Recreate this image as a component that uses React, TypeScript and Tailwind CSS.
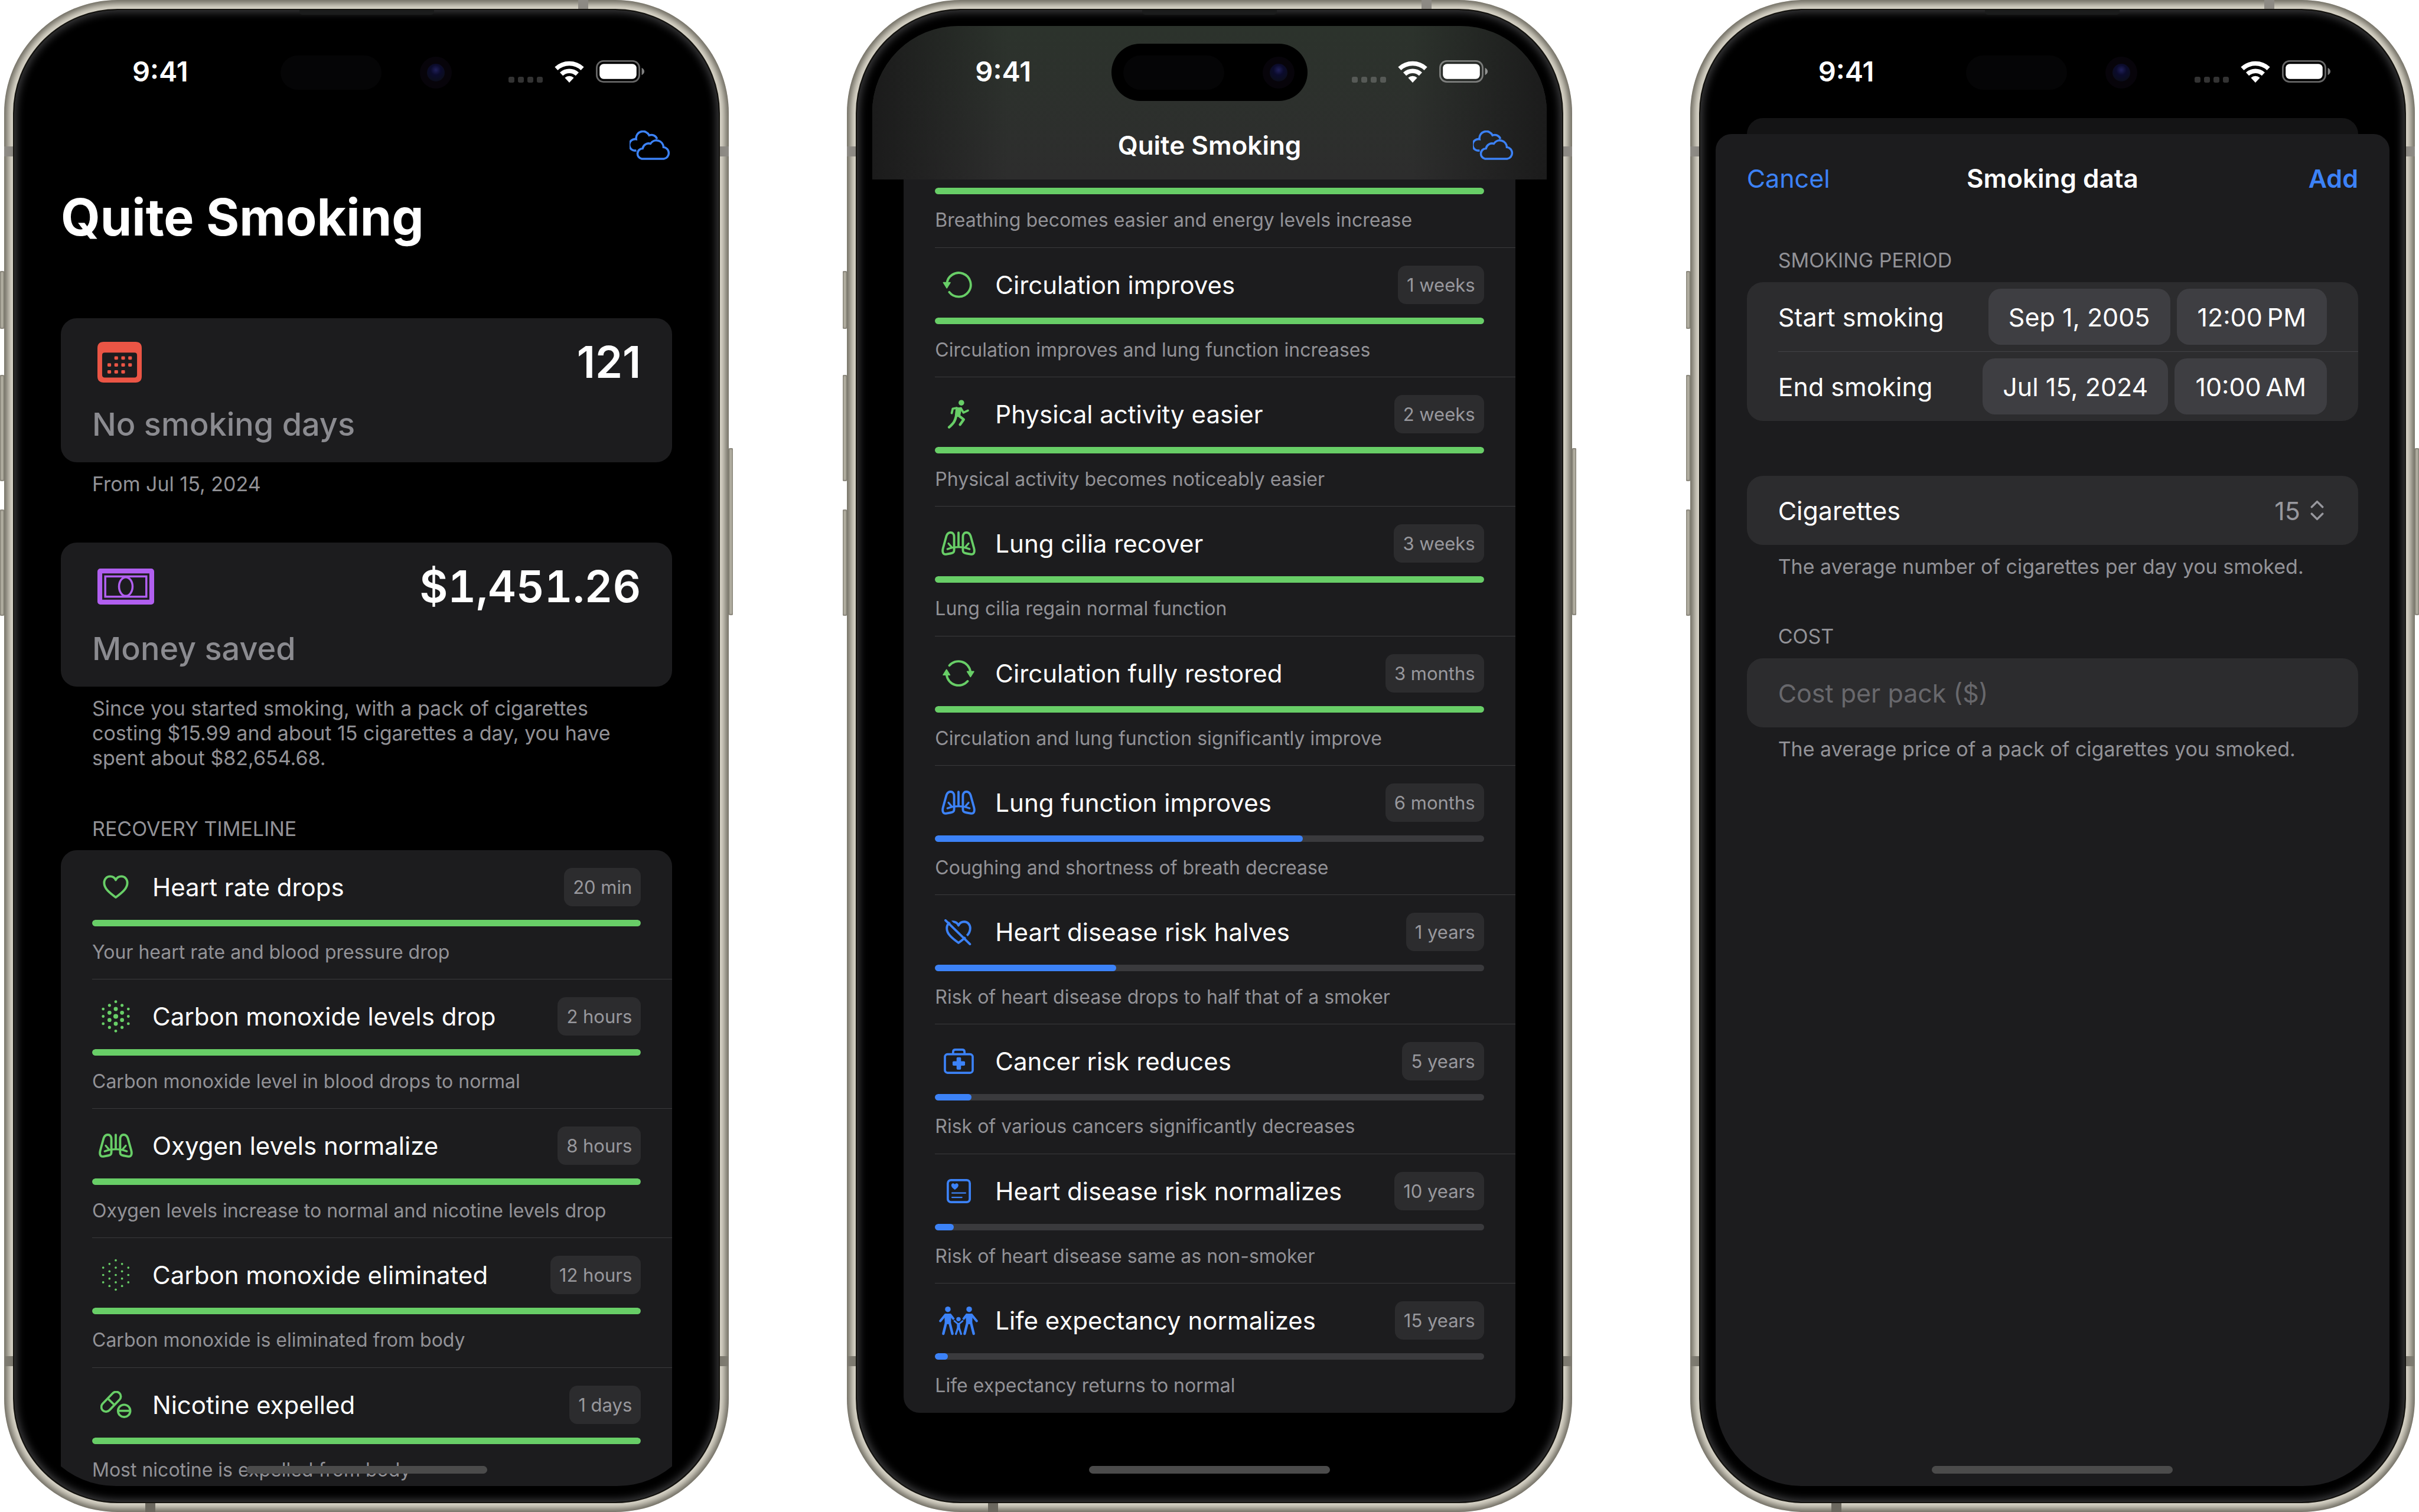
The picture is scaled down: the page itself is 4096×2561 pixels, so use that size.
import type { ReactNode } from "react";

/* ---------- icons ---------- */

function CloudIcon() {
  return (
    <svg viewBox="0 0 78 56" className="h-[50px] w-[69px]" fill="none" stroke="#3c82f7" strokeWidth="4" strokeLinejoin="miter" aria-hidden="true">
      <path d="M13 38A11 11 0 1 1 12.6 16.5A13.2 13.2 0 0 1 37.6 9A11.4 11.4 0 0 1 52.6 16" />
      <path d="M23.3 54A10 10 0 0 1 25 34.2A11.8 11.8 0 0 1 40 25A13.6 13.6 0 0 1 65 31.8A11.2 11.2 0 0 1 65.6 54Z" />
    </svg>
  );
}

function WifiIcon() {
  return (
    <svg viewBox="0 0 57 42" className="h-[37px] w-[50px]" aria-hidden="true">
      <g fill="none" stroke="#fff">
        <path d="M3.3 15A37 37 0 0 1 53.7 15" strokeWidth="8.6" />
        <path d="M13.2 25.5A22.5 22.5 0 0 1 43.8 25.5" strokeWidth="8.6" />
      </g>
      <path d="M28.5 42L19.8 32.8A12.8 12.8 0 0 1 37.2 32.8Z" fill="#fff" />
    </svg>
  );
}

function BatteryIcon() {
  return (
    <svg viewBox="0 0 93 43" className="h-[38px] w-[82px]" aria-hidden="true">
      <rect x="1.6" y="1.6" width="81.8" height="39.8" rx="13" fill="none" stroke="#fff" strokeOpacity=".4" strokeWidth="3.2" />
      <rect x="7" y="7" width="71" height="29" rx="8" fill="#fff" />
      <path d="M88 14.5C91.6 16.6 93 19 93 21.5C93 24 91.6 26.4 88 28.5Z" fill="#fff" fillOpacity=".5" />
    </svg>
  );
}

function CalendarIcon() {
  const cells: [number, number][] = [
    [36, 31], [49.3, 31], [62.6, 31],
    [22.7, 44.3], [36, 44.3], [49.3, 44.3], [62.6, 44.3],
    [22.7, 57.6], [36, 57.6], [49.3, 57.6],
  ];
  return (
    <svg viewBox="0 0 85 78" className="h-[69px] w-[75px]" aria-hidden="true">
      <path
        fill="#eb5545"
        fillRule="evenodd"
        d="M12 0H73Q85 0 85 12V66Q85 78 73 78H12Q0 78 0 66V12Q0 0 12 0ZM14 20.5Q9 20.5 9 25.5V63.5Q9 68.5 14 68.5H71Q76 68.5 76 63.5V25.5Q76 20.5 71 20.5Z"
      />
      {cells.map(([x, y]) => (
        <rect key={`${x}-${y}`} x={x - 3.5} y={y - 3.2} width="7" height="6.4" rx="1.6" fill="#eb5545" />
      ))}
    </svg>
  );
}

function BanknoteIcon() {
  return (
    <svg viewBox="0 0 109 69" className="h-[61px] w-[96px]" fill="none" stroke="#b15ff0" aria-hidden="true">
      <rect x="4.6" y="4.6" width="99.8" height="59.8" rx="1" strokeWidth="9.2" />
      <rect x="15" y="15" width="79" height="39" strokeWidth="4" />
      <ellipse cx="54.5" cy="34.5" rx="13" ry="18" strokeWidth="4" />
    </svg>
  );
}

const HEART = "M25 43.5C12 34 2.5 26 2.5 15.5C2.5 8 7.5 2.8 14 2.8C19 2.8 23 5.5 25 9.8C27 5.5 31 2.8 36 2.8C42.5 2.8 47.5 8 47.5 15.5C47.5 26 38 34 25 43.5Z";

function HeartIcon() {
  return (
    <svg viewBox="0 0 50 47" className="h-[41px] w-[44px]" fill="none" stroke="currentColor" strokeWidth="4.4" strokeLinejoin="round" aria-hidden="true">
      <path d={HEART} />
    </svg>
  );
}

function HeartSlashIcon() {
  return (
    <svg viewBox="-2 -2 54 50" className="h-[44px] w-[48px]" fill="none" strokeLinecap="round" aria-hidden="true">
      <path d={HEART} stroke="currentColor" strokeWidth="4.4" strokeLinejoin="round" />
      <path d="M4 -3L51 42" stroke="#1c1c1e" strokeWidth="4.4" />
      <path d="M0 0L47 46" stroke="currentColor" strokeWidth="4.4" />
    </svg>
  );
}

/* Hexagonal dot cloud: [column, row offset, radius when dense] */
const DOTS: [number, number, number][] = [
  [-2, -1, 2.7], [-2, 0, 2.7], [-2, 1, 2.7],
  [-1, -1.5, 2.9], [-1, -0.5, 3.8], [-1, 0.5, 3.8], [-1, 1.5, 2.9],
  [0, -2, 2.7], [0, -1, 3.9], [0, 0, 4.6], [0, 1, 3.9], [0, 2, 2.7],
  [1, -1.5, 2.9], [1, -0.5, 3.8], [1, 0.5, 3.8], [1, 1.5, 2.9],
  [2, -1, 2.7], [2, 0, 2.7], [2, 1, 2.7],
];

function DotsIcon({ sparse = false }: { sparse?: boolean }) {
  return (
    <svg viewBox="0 0 54 62" className="h-[55px] w-[48px]" fill="currentColor" aria-hidden="true">
      {DOTS.map(([cx, cy, r]) => (
        <circle key={`${cx}:${cy}`} cx={27 + cx * 12} cy={31 + cy * 14} r={sparse ? 2.1 : r} />
      ))}
    </svg>
  );
}

function LungsIcon() {
  const lobe = "M24.5 11C24.5 5 21.5 2.3 17.5 2.3C13 2.3 10.8 5 9.4 9.4L2.9 33C1.3 39.5 2.5 45 8.5 44.5L18.5 42.7C23 42 24.5 40.5 24.5 36.5Z";
  const bronchi = "M33 30.5C28 30.5 20 31 11.5 34.5M13.5 23.5L19.5 30.5";
  return (
    <svg viewBox="0 0 66 47" className="h-[41px] w-[58px]" fill="none" stroke="currentColor" strokeWidth="4.4" strokeLinecap="round" strokeLinejoin="round" aria-hidden="true">
      <path d="M33 2.5V30" />
      <path d={lobe} />
      <path d={bronchi} strokeWidth="3.8" />
      <g transform="matrix(-1 0 0 1 66 0)">
        <path d={lobe} />
        <path d={bronchi} strokeWidth="3.8" />
      </g>
    </svg>
  );
}

function PillsIcon() {
  return (
    <svg viewBox="0 0 60 53" className="h-[47px] w-[53px]" fill="none" stroke="currentColor" strokeWidth="4.2" aria-hidden="true">
      <g transform="rotate(-46 20.5 20.5)">
        <rect x="-2.5" y="11.5" width="46" height="18" rx="9" />
        <path d="M20.5 11.5V29.5" />
      </g>
      <circle cx="45.5" cy="38" r="16.5" fill="#1c1c1e" stroke="none" />
      <circle cx="45.5" cy="38" r="11.8" />
      <path d="M34 38H57" />
    </svg>
  );
}

function LoopIcon() {
  return (
    <svg viewBox="0 0 62 51" className="h-[45px] w-[55px]" aria-hidden="true">
      <path d="M8 23.5A23 23 0 1 1 12.8 39.5" fill="none" stroke="currentColor" strokeWidth="4.4" strokeLinecap="round" />
      <path d="M1.5 21H14.5L8 31.5Z" fill="currentColor" stroke="currentColor" strokeWidth="2" strokeLinejoin="round" />
    </svg>
  );
}

function CycleIcon() {
  return (
    <svg viewBox="0 0 61 51" className="h-[45px] w-[54px]" aria-hidden="true">
      <g fill="none" stroke="currentColor" strokeWidth="4.4" strokeLinecap="round">
        <path d="M13 10.5A23 23 0 0 1 53.3 22" />
        <path d="M48 40.5A23 23 0 0 1 7.7 29" />
      </g>
      <g fill="currentColor" stroke="currentColor" strokeWidth="2" strokeLinejoin="round">
        <path d="M1.2 28.5H13.8L7.5 18.5Z" />
        <path d="M47.2 22H59.8L53.5 32Z" />
      </g>
    </svg>
  );
}

function RunnerIcon() {
  return (
    <svg viewBox="0 0 43 56" className="h-[50px] w-[38px]" fill="none" stroke="currentColor" strokeLinecap="round" strokeLinejoin="round" aria-hidden="true">
      <circle cx="27" cy="5.6" r="5.4" fill="currentColor" stroke="none" />
      <path d="M18.5 17L25 17L22.5 30L17 30Z" fill="currentColor" strokeWidth="5" />
      <path d="M18 15.5L10.5 17L8.5 25.5" strokeWidth="4.2" />
      <path d="M26 16L31 24.5L39.5 20.5" strokeWidth="4.2" />
      <path d="M21.5 30L31.5 37.5L24.5 47.5" strokeWidth="5" />
      <path d="M17 31C15 40 13 44 3.5 52.5" strokeWidth="5" />
    </svg>
  );
}

function MedicalBagIcon() {
  return (
    <svg viewBox="0 0 58 49" className="h-[43px] w-[51px]" fill="none" stroke="currentColor" strokeWidth="4.2" aria-hidden="true">
      <rect x="2.2" y="11" width="53.6" height="35.8" rx="5" />
      <path d="M18 10V6.5Q18 2.2 22.3 2.2H35.7Q40 2.2 40 6.5V10" />
      <g fill="currentColor" stroke="none">
        <rect x="24.7" y="16.8" width="8.6" height="24" rx="2" />
        <rect x="17" y="24.5" width="24" height="8.6" rx="2" />
      </g>
    </svg>
  );
}

function RecordIcon() {
  return (
    <svg viewBox="0 0 46 46" className="h-[41px] w-[41px]" fill="none" stroke="currentColor" strokeLinecap="round" aria-hidden="true">
      <rect x="2.1" y="2.1" width="41.8" height="41.8" rx="6" strokeWidth="4.2" />
      <path d="M15.5 20.5C11.5 17.5 8.7 15 8.7 11.8C8.7 9.5 10.3 8 12.2 8C13.7 8 14.9 8.8 15.5 10.2C16.1 8.8 17.3 8 18.8 8C20.7 8 22.3 9.5 22.3 11.8C22.3 15 19.5 17.5 15.5 20.5Z" fill="currentColor" stroke="none" />
      <path d="M10.3 26.5H35.7M10.3 34.9H28.7" strokeWidth="2.7" />
    </svg>
  );
}

function FamilyIcon() {
  const adult = (
    <>
      <circle cx="17" cy="6" r="5.4" fill="currentColor" stroke="none" />
      <path d="M13 17H21L20.5 32H13.5Z" fill="currentColor" strokeWidth="5" />
      <path d="M12.5 16.5L2.5 28.5M21.5 16.5L27.5 24" strokeWidth="4.6" />
      <path d="M13.5 32L8.3 53M20.5 32L25.7 53" strokeWidth="5" />
    </>
  );
  return (
    <svg viewBox="0 0 75 56" className="h-[50px] w-[66px]" fill="none" stroke="currentColor" strokeLinecap="round" strokeLinejoin="round" aria-hidden="true">
      {adult}
      <g transform="matrix(-1 0 0 1 75 0)">{adult}</g>
      <circle cx="37.5" cy="25" r="4.2" fill="currentColor" stroke="none" />
      <path d="M29.5 28.5L36 34H39L45.5 28.5" strokeWidth="3.2" />
      <path d="M36 34H39V43H36Z" fill="currentColor" strokeWidth="3" />
      <path d="M36 43L32.5 53.5M39 43L42.5 53.5" strokeWidth="3.8" />
    </svg>
  );
}

function UpDownIcon() {
  return (
    <svg viewBox="0 0 26 40" className="h-[35px] w-[23px]" fill="none" stroke="#98989e" strokeWidth="4" strokeLinecap="round" strokeLinejoin="round" aria-hidden="true">
      <path d="M2.5 13.5L13 3L23.5 13.5M2.5 26.5L13 37L23.5 26.5" />
    </svg>
  );
}

/* ---------- device ---------- */

function SideButton({ className }: { className: string }) {
  return <div className={`w-full rounded-[2px] bg-[#b9b5a8] shadow-[inset_0_0_3px_1px_#6f6c62] ${className}`} />;
}

function StatusBar() {
  return (
    <div className="relative flex h-[143px] shrink-0 items-center justify-between pt-[11px] pr-[100px] pl-[174px]">
      <time className="text-[47px] leading-[56px] font-semibold">9:41</time>
      <div className="absolute top-[30px] left-1/2 flex h-[97px] w-[332px] -translate-x-1/2 items-center justify-between rounded-full bg-black pr-[22px] pl-[20px]">
        <div className="h-[58px] w-[171px] rounded-full bg-[#050506]" />
        <div className="flex size-[54px] items-center justify-center rounded-full bg-[#07040a]">
          <div className="size-[30px] rounded-full bg-[radial-gradient(circle_at_50%_35%,#20205a_0,#0b0b2c_35%,#0b0d1e_70%,#080812)]" />
        </div>
      </div>
      <div className="flex items-end gap-[20px]">
        <div className="flex gap-[6px]">
          {[0, 1, 2, 3].map((n) => (
            <div key={n} className="size-[10px] rounded-[3px] bg-white/20" />
          ))}
        </div>
        <WifiIcon />
        <BatteryIcon />
      </div>
    </div>
  );
}

function Phone({ header, children }: { header?: ReactNode; children: ReactNode }) {
  return (
    <section className="flex min-h-0 min-w-0">
      <div className="flex w-[7px] shrink-0 flex-col pt-[459px]">
        <SideButton className="h-[98px]" />
        <SideButton className="mt-[78px] h-[180px]" />
        <SideButton className="mt-[48px] h-[180px]" />
      </div>
      <div className="relative min-w-0 flex-1 rounded-[192px] bg-[#dad6c9] p-[15px] shadow-[inset_0_0_11px_6px_#6b685e]">
        <div className="absolute top-[248px] left-0 h-[17px] w-full bg-[#8d8a84]" />
        <div className="absolute bottom-[247px] left-0 h-[17px] w-full bg-[#7d7a70]" />
        <div className="absolute top-0 right-[238px] h-[15px] w-[17px] bg-[#8d8a84]" />
        <div className="absolute bottom-0 left-[239px] h-[15px] w-[17px] bg-[#6b685f]" />
        <div className="relative h-full rounded-[177px] border-2 border-[#14130f] bg-black px-[26px] py-[27px] shadow-[inset_0_0_14px_4px_#3c3c3e]">
          <div className="absolute top-0 left-1/2 h-[8px] w-[228px] -translate-x-1/2 rounded-b-[5px] bg-[#1b1c1c]" />
          <div className="relative flex h-full flex-col overflow-hidden rounded-[146px] bg-black text-white">
            {header ?? <StatusBar />}
            {children}
            <div className="absolute bottom-[21px] left-1/2 h-[13px] w-[408px] -translate-x-1/2 rounded-full bg-[#4b4b4b]" />
          </div>
        </div>
      </div>
      <div className="flex w-[7px] shrink-0 flex-col pt-[759px]">
        <SideButton className="h-[283px]" />
      </div>
    </section>
  );
}

/* ---------- recovery timeline ---------- */

type Milestone = { title: string; badge: string; note: string; icon: ReactNode; progress: number };

function Progress({ value }: { value: number }) {
  return (
    <div role="progressbar" aria-valuenow={value} aria-valuemin={0} aria-valuemax={100} className="h-[11px] overflow-hidden rounded-full bg-[#3a3a3d]">
      <div className={`h-full rounded-full ${value === 100 ? "bg-[#68ce67]" : "bg-[#3c82f7]"}`} style={{ width: `${value}%` }} />
    </div>
  );
}

function MilestoneRow({ item }: { item: Milestone }) {
  return (
    <li className="ml-[53px] border-b border-[#3a3a3c] pt-[30px] pr-[53px] pb-[24px] last:border-b-transparent nth-[4n]:pb-[25px]">
      <div className="flex h-[65px] items-center">
        <div className={`flex w-[80px] shrink-0 justify-center ${item.progress === 100 ? "text-[#68ce67]" : "text-[#3c82f7]"}`}>{item.icon}</div>
        <h3 className="ml-[22px] flex-1 whitespace-nowrap text-[42px] leading-[56px]">{item.title}</h3>
        <span className="rounded-[14px] bg-[#2c2c2e] px-[15px] py-[11px] text-[31px] leading-[43px] whitespace-nowrap text-[#98989d]">{item.badge}</span>
      </div>
      <div className="mt-[23px]">
        <Progress value={item.progress} />
      </div>
      <p className="mt-[23px] text-[32px] leading-[42px] whitespace-nowrap text-[#929297]">{item.note}</p>
    </li>
  );
}

const EARLY: Milestone[] = [
  { title: "Heart rate drops", badge: "20 min", note: "Your heart rate and blood pressure drop", icon: <HeartIcon />, progress: 100 },
  { title: "Carbon monoxide levels drop", badge: "2 hours", note: "Carbon monoxide level in blood drops to normal", icon: <DotsIcon />, progress: 100 },
  { title: "Oxygen levels normalize", badge: "8 hours", note: "Oxygen levels increase to normal and nicotine levels drop", icon: <LungsIcon />, progress: 100 },
  { title: "Carbon monoxide eliminated", badge: "12 hours", note: "Carbon monoxide is eliminated from body", icon: <DotsIcon sparse />, progress: 100 },
  { title: "Nicotine expelled", badge: "1 days", note: "Most nicotine is expelled from body", icon: <PillsIcon />, progress: 100 },
];

const LATE: Milestone[] = [
  { title: "Circulation improves", badge: "1 weeks", note: "Circulation improves and lung function increases", icon: <LoopIcon />, progress: 100 },
  { title: "Physical activity easier", badge: "2 weeks", note: "Physical activity becomes noticeably easier", icon: <RunnerIcon />, progress: 100 },
  { title: "Lung cilia recover", badge: "3 weeks", note: "Lung cilia regain normal function", icon: <LungsIcon />, progress: 100 },
  { title: "Circulation fully restored", badge: "3 months", note: "Circulation and lung function significantly improve", icon: <CycleIcon />, progress: 100 },
  { title: "Lung function improves", badge: "6 months", note: "Coughing and shortness of breath decrease", icon: <LungsIcon />, progress: 67 },
  { title: "Heart disease risk halves", badge: "1 years", note: "Risk of heart disease drops to half that of a smoker", icon: <HeartSlashIcon />, progress: 33 },
  { title: "Cancer risk reduces", badge: "5 years", note: "Risk of various cancers significantly decreases", icon: <MedicalBagIcon />, progress: 6.6 },
  { title: "Heart disease risk normalizes", badge: "10 years", note: "Risk of heart disease same as non-smoker", icon: <RecordIcon />, progress: 3.4 },
  { title: "Life expectancy normalizes", badge: "15 years", note: "Life expectancy returns to normal", icon: <FamilyIcon />, progress: 2.3 },
];

/* ---------- screens ---------- */

function StatCard({ icon, label, children }: { icon: ReactNode; label: string; children: ReactNode }) {
  return (
    <div className="rounded-[27px] bg-[#1c1c1e] px-[53px] pt-[38px] pb-[29px]">
      <div className="flex h-[72px] items-center justify-between pl-[9px] text-[74px] leading-[72px] font-semibold">
        {icon}
        {children}
      </div>
      <p className="mt-[35px] text-[54px] leading-[70px] font-medium text-[#8b8b90]">{label}</p>
    </div>
  );
}

function Footnote({ children }: { children: ReactNode }) {
  return <p className="mt-[16px] px-[53px] text-[34px] leading-[42px] text-[#929297]">{children}</p>;
}

function SectionLabel({ children }: { children: ReactNode }) {
  return <h2 className="px-[53px] text-[34px] leading-[42px] text-[#929297] uppercase">{children}</h2>;
}

function SummaryScreen() {
  return (
    <Phone>
      <div className="flex h-[117px] shrink-0 items-center justify-end pr-[56px]">
        <button type="button" aria-label="Weather">
          <CloudIcon />
        </button>
      </div>
      <main className="px-[53px]">
        <h1 className="mt-[10px] text-[86px] leading-[108px] font-bold whitespace-nowrap">Quite Smoking</h1>
        <div className="mt-[117px]">
          <StatCard icon={<CalendarIcon />} label="No smoking days">
            <span>121</span>
          </StatCard>
          <Footnote>From Jul 15, 2024</Footnote>
        </div>
        <div className="mt-[78px]">
          <StatCard icon={<BanknoteIcon />} label="Money saved">
            <span className="tabular-nums">$1,451.26</span>
          </StatCard>
          <Footnote>Since you started smoking, with a pack of cigarettes costing $15.99 and about 15 cigarettes a day, you have spent about $82,654.68.</Footnote>
        </div>
        <div className="mt-[78px]">
          <SectionLabel>Recovery timeline</SectionLabel>
          <ul className="mt-[15px] rounded-[27px] bg-[#1c1c1e]">
            {EARLY.map((item) => (
              <MilestoneRow key={item.title} item={item} />
            ))}
          </ul>
        </div>
      </main>
    </Phone>
  );
}

function TimelineScreen() {
  return (
    <Phone
      header={
        <header className="shrink-0 bg-[linear-gradient(90deg,#1b1b1b,transparent_20%,transparent_80%,#1b1b1b),linear-gradient(#2c332c,#2d2d2d)]">
          <StatusBar />
          <div className="grid h-[117px] grid-cols-[1fr_auto_1fr] items-center pr-[56px] pl-[56px]">
            <span />
            <h1 className="text-[44px] leading-[56px] font-semibold">Quite Smoking</h1>
            <button type="button" aria-label="Weather" className="justify-self-end">
              <CloudIcon />
            </button>
          </div>
        </header>
      }
    >
      <main className="px-[53px]">
        <ul className="rounded-b-[27px] bg-[#1c1c1e]">
          <li className="ml-[53px] border-b border-[#3a3a3c] pt-[14px] pr-[53px] pb-[25px]">
            <Progress value={100} />
            <p className="mt-[23px] text-[32px] leading-[42px] text-[#929297]">Breathing becomes easier and energy levels increase</p>
          </li>
          {LATE.map((item) => (
            <MilestoneRow key={item.title} item={item} />
          ))}
        </ul>
      </main>
    </Phone>
  );
}

function DateRow({ id, label, date, time }: { id: string; label: string; date: string; time: string }) {
  return (
    <div className="flex h-[117px] items-center gap-[11px]">
      <span id={id} className="flex-1 text-[43px] leading-[56px]">{label}</span>
      <button type="button" aria-describedby={id} className="h-[95px] rounded-[21px] bg-[#3e3e42] px-[34px] text-[43px] leading-[56px]">{date}</button>
      <button type="button" aria-describedby={id} className="h-[95px] rounded-[21px] bg-[#3e3e42] px-[35px] text-[43px] leading-[56px]">{time}</button>
    </div>
  );
}

function FormScreen() {
  return (
    <Phone>
      <div className="mx-[53px] mt-[13px] h-[27px] shrink-0 rounded-t-[27px] bg-[#141415]" />
      <form className="flex-1 rounded-t-[27px] bg-[#1c1c1e] px-[53px]">
        <div className="grid h-[150px] grid-cols-[1fr_auto_1fr] items-center text-[43px] leading-[56px]">
          <button type="button" className="justify-self-start text-[#3c82f7]">Cancel</button>
          <h1 className="text-[44px] leading-[56px] font-semibold">Smoking data</h1>
          <button type="button" className="justify-self-end font-semibold text-[#3c82f7]">Add</button>
        </div>
        <div className="mt-[43px]">
          <SectionLabel>Smoking period</SectionLabel>
          <div className="mt-[16px] rounded-[27px] bg-[#2c2c2e]">
            <div className="px-[53px]">
              <DateRow id="start" label="Start smoking" date="Sep 1, 2005" time={"12:00\u2009PM"} />
            </div>
            <div className="ml-[53px] h-px bg-[#434346]" />
            <div className="px-[53px]">
              <DateRow id="end" label="End smoking" date="Jul 15, 2024" time={"10:00\u2009AM"} />
            </div>
          </div>
        </div>
        <div className="mt-[93px]">
          <div className="flex h-[117px] items-center rounded-[27px] bg-[#2c2c2e] pr-[58px] pl-[53px] text-[43px] leading-[56px]">
            <label htmlFor="cigarettes" className="flex-1">Cigarettes</label>
            <select id="cigarettes" defaultValue="15" className="mr-[17px] appearance-none bg-transparent text-[#98989e] [field-sizing:content]">
              <option>10</option>
              <option>15</option>
              <option>20</option>
            </select>
            <UpDownIcon />
          </div>
          <Footnote>The average number of cigarettes per day you smoked.</Footnote>
        </div>
        <div className="mt-[76px]">
          <SectionLabel>Cost</SectionLabel>
          <input aria-label="Cost per pack" placeholder="Cost per pack ($)" className="mt-[16px] block h-[117px] w-full rounded-[27px] bg-[#2c2c2e] px-[53px] text-[43px] leading-[56px] placeholder:text-[#68686c]" />
          <Footnote>The average price of a pack of cigarettes you smoked.</Footnote>
        </div>
      </form>
    </Phone>
  );
}

export default function App() {
  return (
    <div className="grid h-screen grid-cols-3 grid-rows-1 gap-[186px] overflow-hidden bg-white font-['Inter','Liberation_Sans',sans-serif]">
      <SummaryScreen />
      <TimelineScreen />
      <FormScreen />
    </div>
  );
}
